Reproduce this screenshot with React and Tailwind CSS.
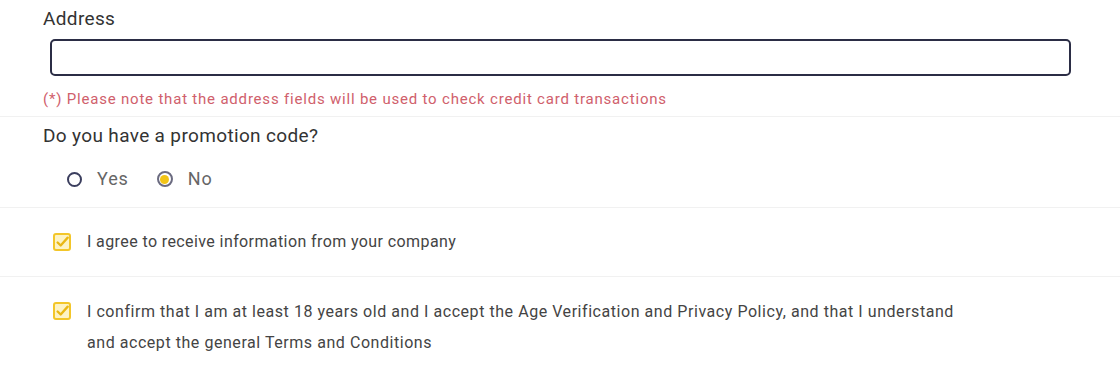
import React from "react";

function Check() {
  return (
    <span className="flex h-[18px] w-[18px] shrink-0 items-center justify-center rounded-[3px] border-2 border-[#f3c629] bg-[#fdf3c4]">
      <svg viewBox="0 0 16 16" className="h-[16px] w-[16px]" fill="none">
        <path d="M3 8.5 L6.5 12 L14.5 3" stroke="#e9b714" strokeWidth="2.6" strokeLinecap="round" strokeLinejoin="round" />
      </svg>
    </span>
  );
}

export default function App() {
  return (
    <div className="w-[1120px] h-[371px] overflow-hidden bg-white text-[#333]" style={{ fontFamily: "Roboto, 'Liberation Sans', sans-serif" }}>
      <div className="px-[43px] pt-[7px]">
        <div className="text-[19px] leading-[24px] tracking-[0.35px] text-[#333]">Address</div>
        <div className="mt-[8px] ml-[7px] mr-[6px] h-[37px] rounded-[5px] border-2 border-[#2b2d45] bg-white"></div>
        <div className="mt-[13px] text-[15px] leading-[20px] tracking-[0.8px] text-[#d0606c]">(*) Please note that the address fields will be used to check credit card transactions</div>
      </div>
      <div className="mt-[7px] h-px bg-[#f1f1f1]"></div>
      <div className="px-[43px] pt-[7px]">
        <div className="text-[19px] leading-[24px] tracking-[0.35px] text-[#333]">Do you have a promotion code?</div>
        <div className="mt-[20px] flex items-center pl-[24px] text-[18px] leading-[22px] tracking-[0.9px] text-[#666]">
          <span className="h-[15px] w-[15px] rounded-full border-[2.5px] border-[#3b3e5e]"></span>
          <span className="ml-[15px]">Yes</span>
          <span className="ml-[28px] flex h-[16px] w-[16px] items-center justify-center rounded-full border-[2px] border-[#6b6b80] bg-white">
            <span className="h-[9px] w-[9px] rounded-full bg-[#f2c416]"></span>
          </span>
          <span className="ml-[15px]">No</span>
        </div>
      </div>
      <div className="mt-[17px] h-px bg-[#f1f1f1]"></div>
      <div className="flex items-center pl-[53px] h-[68px]">
        <Check />
        <span className="ml-[16px] text-[16px] leading-[20px] tracking-[0.4px] text-[#444]">I agree to receive information from your company</span>
      </div>
      <div className="h-px bg-[#f1f1f1]"></div>
      <div className="flex items-start pl-[53px] pt-[19px]">
        <div className="mt-[6px]"><Check /></div>
        <span className="ml-[16px] w-[885px] text-[16px] leading-[31px] tracking-[0.55px] text-[#444]">I confirm that I am at least 18 years old and I accept the Age Verification and Privacy Policy, and that I understand and accept the general Terms and Conditions</span>
      </div>
    </div>
  );
}
